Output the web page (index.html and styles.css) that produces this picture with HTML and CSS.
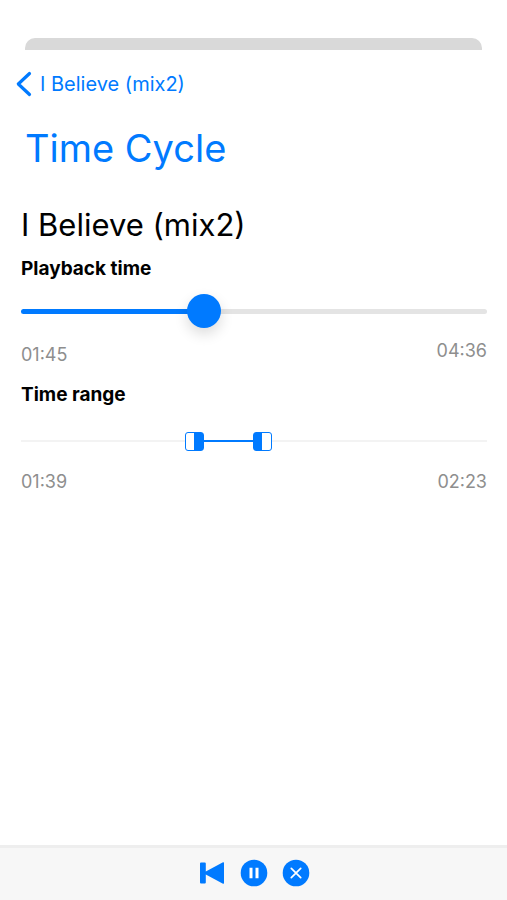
FILE: index.html
```html
<!DOCTYPE html>
<html lang="en">
<head>
<meta charset="UTF-8" />
<meta name="viewport" content="width=device-width, initial-scale=1" />
<title>Time Cycle</title>
<link rel="stylesheet" href="styles.css">
</head>
<body>
  <div class="sheet-behind"></div>

  <nav class="nav">
    <a class="back" href="#">
      <svg width="16" height="26" viewBox="0 0 16 26" aria-hidden="true"><path d="M13.500 2.500 2.300 13l11.200 10.500" fill="none" stroke="currentColor" stroke-width="3.200" stroke-linecap="round" stroke-linejoin="round"/></svg>
      <span>I Believe (mix2)</span>
    </a>
  </nav>

  <main class="content">
    <h1 class="title">Time Cycle</h1>
    <h2 class="song">I Believe (mix2)</h2>

    <section class="block">
      <label class="label" for="playback">Playback time</label>
      <input class="playback" id="playback" type="range" min="0" max="276" value="106" style="--value: 38%">
      <div class="times playback-times">
        <span>01:45</span>
        <span class="total">04:36</span>
      </div>
    </section>

    <section class="block" role="group" aria-labelledby="range-label">
      <div class="label" id="range-label">Time range</div>
      <div class="range" id="range" style="--from: 37%; --to: 52%">
        <input class="handle handle-start" id="start" type="range" min="0" max="276" value="101" aria-label="Range start">
        <input class="handle handle-end" id="end" type="range" min="0" max="276" value="143" aria-label="Range end">
      </div>
      <div class="times">
        <span>01:39</span>
        <span>02:23</span>
      </div>
    </section>
  </main>

  <footer class="player">
    <button class="control" type="button" aria-label="Back to start">
      <svg width="28" height="28" viewBox="0 0 28 28"><path d="M2 4.500q0-1 1-1h3.800q1 0 1 1v8L25 3.300q1-.5 1 .6v20.200q0 1.100-1 .6L7.800 15.500v8q0 1-1 1H3q-1 0-1-1z" fill="currentColor"/></svg>
    </button>
    <button class="control" type="button" aria-label="Pause">
      <svg width="28" height="28" viewBox="0 0 28 28"><circle cx="14" cy="14" r="13.300" fill="currentColor"/><path d="M9.500 8.700h3v10.600h-3zM15.500 8.700h3v10.600h-3z" fill="#fff"/></svg>
    </button>
    <button class="control" type="button" aria-label="Close">
      <svg width="28" height="28" viewBox="0 0 28 28"><circle cx="14" cy="14" r="13.300" fill="currentColor"/><path d="m9.300 9.300 9.400 9.400m0-9.400-9.400 9.400" stroke="#fff" stroke-width="1.700" stroke-linecap="round"/></svg>
    </button>
  </footer>

<script>
  const playback = document.getElementById('playback');
  const range = document.getElementById('range');
  const start = document.getElementById('start');
  const end = document.getElementById('end');

  function percent(input) {
    return (input.value / input.max) * 100 + '%';
  }

  playback.addEventListener('input', () => {
    playback.style.setProperty('--value', percent(playback));
  });

  // Keep the start handle to the left of the end handle
  function updateRange() {
    if (+start.value > +end.value) start.value = end.value;
    range.style.setProperty('--from', percent(start));
    range.style.setProperty('--to', percent(end));
  }

  start.addEventListener('input', updateRange);
  end.addEventListener('input', updateRange);
</script>
</body>
</html>
```
FILE: styles.css
```css
:root {
  --blue: #007aff;
}
* {
  box-sizing: border-box;
}
body {
  margin: 0;
  min-height: 100vh;
  display: flex;
  flex-direction: column;
  background: #fff;
  color: #000;
  font-family: Inter, "Liberation Sans", sans-serif;
}
.sheet-behind {
  height: 12px;
  margin: 38px 25px 0;
  background: #d9d9d9;
  border-radius: 10px 10px 0 0;
}
.nav {
  padding: 21px 16px 0;
}
.back {
  display: inline-flex;
  align-items: center;
  gap: 8px;
  color: var(--blue);
  font-size: 20px;
  line-height: 26px;
  text-decoration: none;
}
.content {
  flex: 1;
  padding: 0 20px 0 21px;
}
.title {
  margin: 21px 0 0;
  padding-left: 4px;
  color: var(--blue);
  font-size: 38px;
  line-height: 52px;
  font-weight: 400;
}
.song {
  margin: 31px 0 0;
  font-size: 31px;
  line-height: 40px;
  font-weight: 400;
}
.block {
  display: flex;
  flex-direction: column;
  margin-bottom: 4px;
}
.label {
  margin-top: 12px;
  font-size: 19px;
  line-height: 24px;
  font-weight: 700;
}
.times {
  display: flex;
  justify-content: space-between;
  color: #8e8e8e;
  font-size: 18px;
  line-height: 24px;
}
.playback-times {
  align-items: flex-end;
}
.total {
  padding-bottom: 4px;
}
/* Playback slider */
.playback {
  appearance: none;
  width: 100%;
  height: 34px;
  margin: 13px 0 11px;
  background: none;
}
.playback::-webkit-slider-runnable-track {
  height: 5px;
  border-radius: 3px;
  background: linear-gradient(to right, var(--blue) var(--value), #e4e4e4 var(--value));
}
.playback::-webkit-slider-thumb {
  appearance: none;
  width: 34px;
  height: 34px;
  margin-top: -15px;
  border-radius: 50%;
  background: var(--blue);
  box-shadow: 0 6px 14px rgba(0, 0, 0, 0.14);
}
/* Two sliders stacked on one line */
.range {
  display: grid;
  align-items: center;
  height: 20px;
  margin: 24px 0 19px;
  background:
    linear-gradient(to right, #f3f3f3 var(--from), var(--blue) var(--from), var(--blue) var(--to), #f3f3f3 var(--to))
    center / 100% 2px no-repeat;
}
.handle {
  appearance: none;
  grid-area: 1 / 1;
  width: 100%;
  height: 20px;
  margin: 0;
  background: none;
  pointer-events: none;
}
.handle::-webkit-slider-thumb {
  appearance: none;
  width: 19px;
  height: 19px;
  border: 1px solid var(--blue);
  border-radius: 3px;
  pointer-events: auto;
}
.handle-start::-webkit-slider-thumb {
  background: linear-gradient(to right, #fff 50%, var(--blue) 50%);
}
.handle-end::-webkit-slider-thumb {
  background: linear-gradient(to right, var(--blue) 50%, #fff 50%);
}
/* Bottom player bar */
.player {
  display: flex;
  justify-content: center;
  gap: 14px;
  padding: 11px 0 13px;
  border-top: 3px solid #eee;
  background: #f7f7f7;
}
.control {
  display: flex;
  padding: 0;
  border: none;
  background: none;
  color: var(--blue);
  cursor: pointer;
}
```
